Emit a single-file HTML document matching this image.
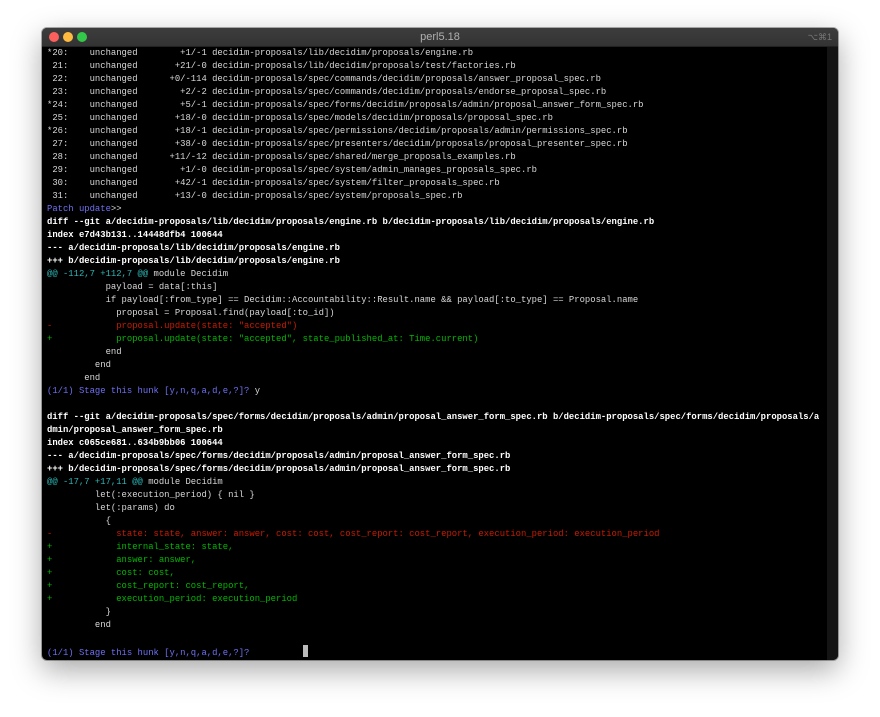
<!DOCTYPE html>
<html><head><style>
html,body{margin:0;padding:0;width:880px;height:717px;background:#fff;overflow:hidden}
.win{position:absolute;left:42px;top:28px;width:796px;height:632px;background:#000;border-radius:5px;box-shadow:0 10px 30px rgba(0,0,0,.35),0 0 0 1px rgba(0,0,0,.3);overflow:hidden}
.tb{position:absolute;left:0;top:0;width:100%;height:18px;background:linear-gradient(#3d3d3d,#333);border-bottom:1px solid #222}
.dot{position:absolute;top:4px;width:10px;height:10px;border-radius:50%}
.title{position:absolute;left:0;right:0;top:3px;text-align:center;font:11px "Liberation Sans",sans-serif;color:#b0b0b0}
.kb{position:absolute;right:6px;top:4px;font:9px "Liberation Sans",sans-serif;color:#777}
.sb{position:absolute;right:0;top:19px;width:11px;bottom:0;background:#141414}
pre{position:absolute;left:5px;top:19px;margin:0;font:8.9px/13px "Liberation Mono",monospace;color:#d8d8d8;white-space:pre}
b{color:#fff}
.bl{color:#6f6ff5}.cy{color:#2cb5b5}.r{color:#c91b00}.g{color:#00b800}
.cur{display:inline-block;width:5px;height:12px;background:#bbb;vertical-align:-2px}
</style></head><body>
<div class="win">
<div class="tb"><div class="dot" style="left:7px;background:#fc605c"></div><div class="dot" style="left:21px;background:#fdbc40"></div><div class="dot" style="left:35px;background:#34c84a"></div><div class="title">perl5.18</div><div class="kb">⌥⌘1</div></div>
<div class="sb"></div>
<pre>*20:    unchanged        +1/-1 decidim-proposals/lib/decidim/proposals/engine.rb
 21:    unchanged       +21/-0 decidim-proposals/lib/decidim/proposals/test/factories.rb
 22:    unchanged      +0/-114 decidim-proposals/spec/commands/decidim/proposals/answer_proposal_spec.rb
 23:    unchanged        +2/-2 decidim-proposals/spec/commands/decidim/proposals/endorse_proposal_spec.rb
*24:    unchanged        +5/-1 decidim-proposals/spec/forms/decidim/proposals/admin/proposal_answer_form_spec.rb
 25:    unchanged       +18/-0 decidim-proposals/spec/models/decidim/proposals/proposal_spec.rb
*26:    unchanged       +18/-1 decidim-proposals/spec/permissions/decidim/proposals/admin/permissions_spec.rb
 27:    unchanged       +38/-0 decidim-proposals/spec/presenters/decidim/proposals/proposal_presenter_spec.rb
 28:    unchanged      +11/-12 decidim-proposals/spec/shared/merge_proposals_examples.rb
 29:    unchanged        +1/-0 decidim-proposals/spec/system/admin_manages_proposals_spec.rb
 30:    unchanged       +42/-1 decidim-proposals/spec/system/filter_proposals_spec.rb
 31:    unchanged       +13/-0 decidim-proposals/spec/system/proposals_spec.rb
<span class="bl">Patch update</span>&gt;&gt;
<b>diff --git a/decidim-proposals/lib/decidim/proposals/engine.rb b/decidim-proposals/lib/decidim/proposals/engine.rb</b>
<b>index e7d43b131..14448dfb4 100644</b>
<b>--- a/decidim-proposals/lib/decidim/proposals/engine.rb</b>
<b>+++ b/decidim-proposals/lib/decidim/proposals/engine.rb</b>
<span class="cy">@@ -112,7 +112,7 @@</span> module Decidim
           payload = data[:this]
           if payload[:from_type] == Decidim::Accountability::Result.name &amp;&amp; payload[:to_type] == Proposal.name
             proposal = Proposal.find(payload[:to_id])
<span class="r">-            proposal.update(state: "accepted")</span>
<span class="g">+            proposal.update(state: "accepted", state_published_at: Time.current)</span>
           end
         end
       end
<span class="bl">(1/1) Stage this hunk [y,n,q,a,d,e,?]?</span> y

<b>diff --git a/decidim-proposals/spec/forms/decidim/proposals/admin/proposal_answer_form_spec.rb b/decidim-proposals/spec/forms/decidim/proposals/a</b>
<b>dmin/proposal_answer_form_spec.rb</b>
<b>index c065ce681..634b9bb06 100644</b>
<b>--- a/decidim-proposals/spec/forms/decidim/proposals/admin/proposal_answer_form_spec.rb</b>
<b>+++ b/decidim-proposals/spec/forms/decidim/proposals/admin/proposal_answer_form_spec.rb</b>
<span class="cy">@@ -17,7 +17,11 @@</span> module Decidim
         let(:execution_period) { nil }
         let(:params) do
           {
<span class="r">-            state: state, answer: answer, cost: cost, cost_report: cost_report, execution_period: execution_period</span>
<span class="g">+            internal_state: state,</span>
<span class="g">+            answer: answer,</span>
<span class="g">+            cost: cost,</span>
<span class="g">+            cost_report: cost_report,</span>
<span class="g">+            execution_period: execution_period</span>
           }
         end

<span class="bl">(1/1) Stage this hunk [y,n,q,a,d,e,?]?</span>          <span class="cur"></span></pre>
</div>
</body></html>
